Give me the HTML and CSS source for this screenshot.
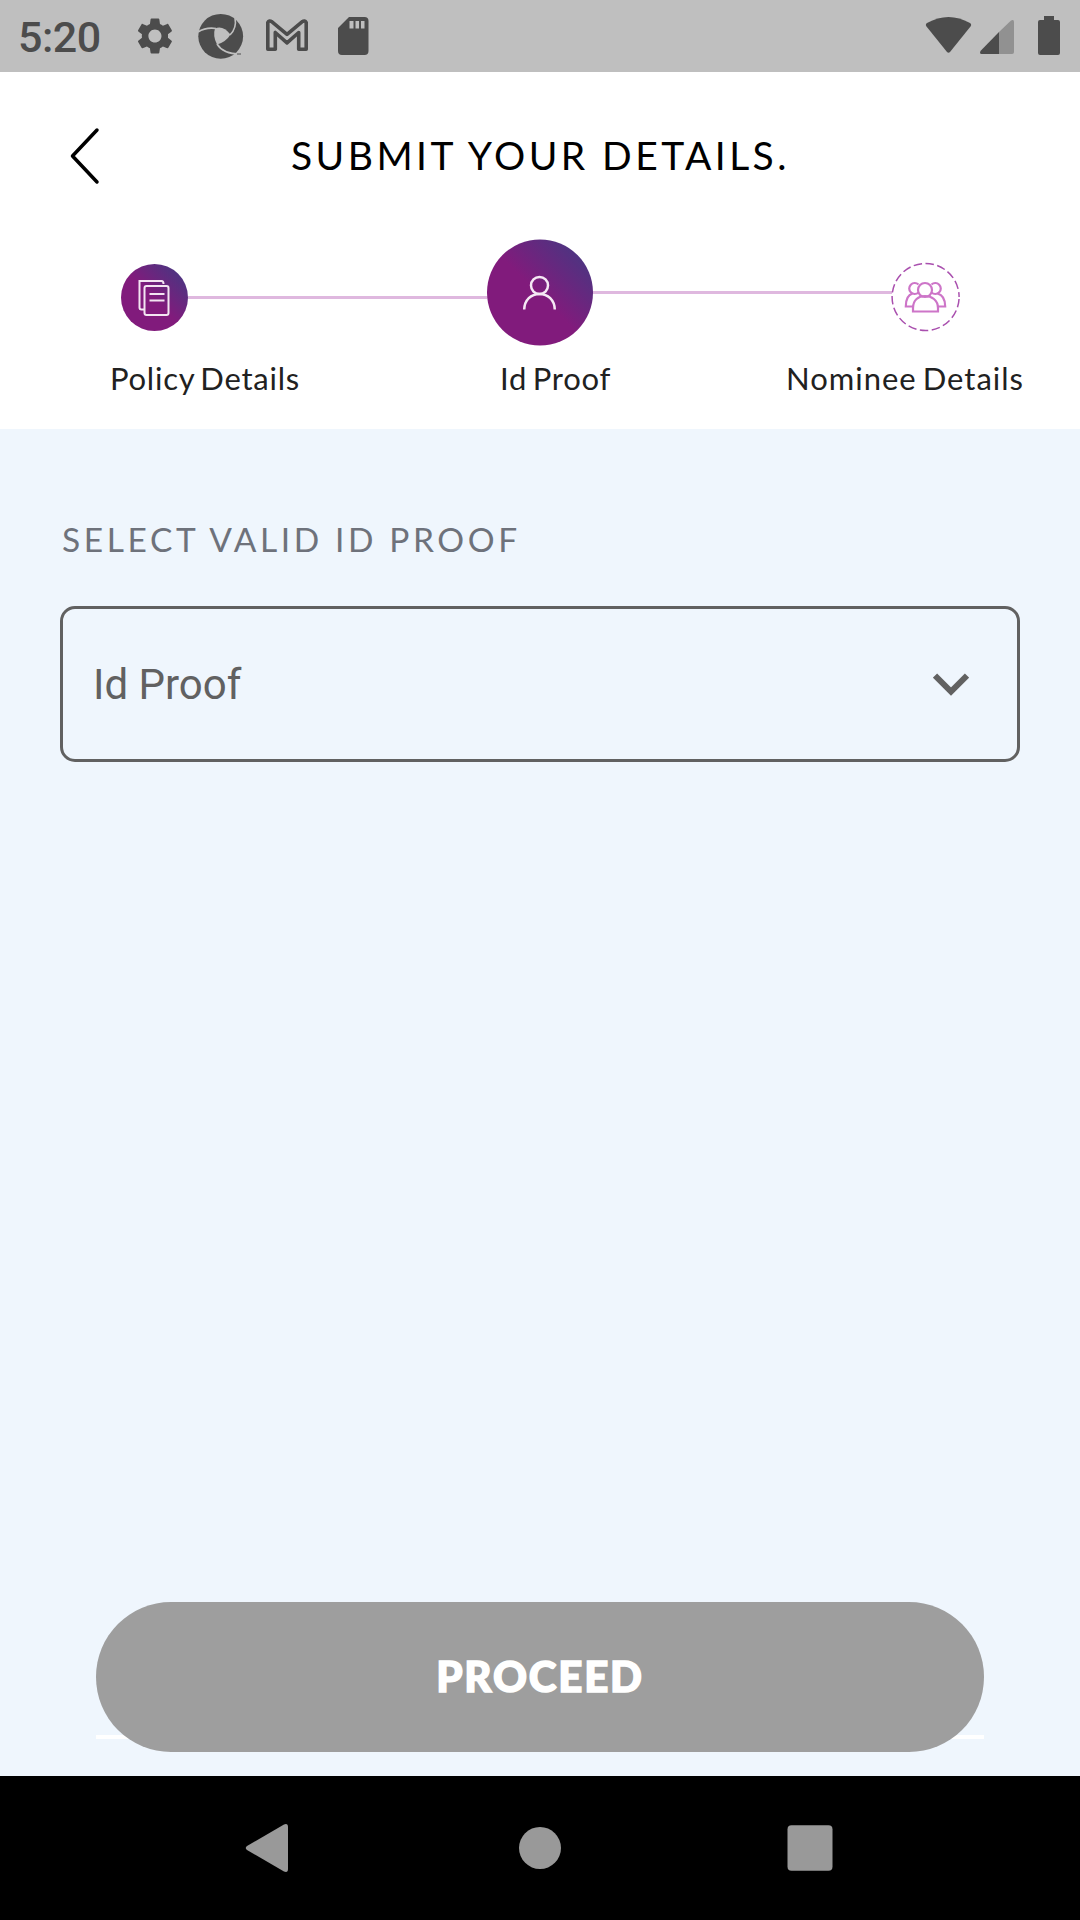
FILE: index.html
```html
<!DOCTYPE html>
<html lang="en">
<head>
<meta charset="utf-8">
<title>Submit your details</title>
<link rel="stylesheet" href="styles.css">
</head>
<body>
<div class="screen">
  <div class="status-bar">
    <span class="clock">5:20</span>
    <svg class="notifications" width="240" height="72" viewBox="130 0 240 72" fill="#4c4c4c">
      <path transform="translate(133.1 14.2) scale(1.82)" d="M19.14 12.94c.04-.3.06-.61.06-.94 0-.32-.02-.64-.07-.94l2.03-1.58c.18-.14.23-.41.12-.61l-1.92-3.32c-.12-.22-.37-.29-.59-.22l-2.39.96c-.5-.38-1.03-.7-1.62-.94l-.36-2.54c-.04-.24-.24-.41-.48-.41h-3.84c-.24 0-.43.17-.47.41l-.36 2.54c-.59.24-1.13.57-1.62.94l-2.39-.96c-.22-.08-.47 0-.59.22L2.74 8.87c-.12.21-.08.47.12.61l2.03 1.58c-.05.3-.09.63-.09.94s.02.64.07.94l-2.03 1.58c-.18.14-.23.41-.12.61l1.92 3.32c.12.22.37.29.59.22l2.39-.96c.5.38 1.03.7 1.62.94l.36 2.54c.05.24.24.41.48.41h3.84c.24 0 .44-.17.47-.41l.36-2.54c.59-.24 1.13-.56 1.62-.94l2.39.96c.22.08.47 0 .59-.22l1.92-3.32c.12-.22.07-.47-.12-.61l-2.01-1.58zM12 15.6c-1.98 0-3.6-1.62-3.6-3.6s1.62-3.6 3.6-3.6 3.6 1.62 3.6 3.6-1.62 3.6-3.6 3.6z"/>
      <circle cx="220.7" cy="36.3" r="22.4"/>
      <path fill="#bfbfbf" d="M215 28.500Q223 25 230.500 34.500Q226 42 217 44.500Q212.500 36 215 28.500Z"/>
      <path fill="none" stroke="#bfbfbf" stroke-width="1.6" d="M198 32Q206 27 216 28.500M235 18Q237 28 230 35M217 44Q223 54 240 54"/>
      <path d="M237 53.500h4v1h-4z"/>
      <path fill="none" stroke="#4c4c4c" stroke-width="3.600" stroke-linejoin="round" d="M267.800 49.200V22.500Q269 20 272 21.800L287 34.300L302 21.800Q305 20 306.200 22.500V49.200H298.700V32.500L287 42.800L275.300 32.500V49.200Z"/>
      <path fill-rule="evenodd" d="M349 17h15.500q4 0 4 4v30q0 4-4 4H342q-4 0-4-4V28zM349.500 21v7.500h4V21zM355.500 21v7.500h3.500V21zM361 21v7.500h3.500V21z"/>
    </svg>
    <svg class="system" width="150" height="72" viewBox="920 0 150 72" fill="#4c4c4c">
      <path d="M926.500 26.500Q925 24.500 927 23Q948.500 11 970 23Q972 24.500 970.500 26.500L950 52Q948.500 53.500 947 52Z"/>
      <path fill="#919191" d="M999 32L1011 20.500Q1014 19 1014 22V52Q1014 54 1012 54H999Z"/>
      <path d="M999 32V54H981.500Q979 53.500 980.700 50.700Z"/>
      <path d="M1044 16h10v4h4q2 0 2 2v31q0 2-2 2h-18q-2 0-2-2V22q0-2 2-2h4z"/>
    </svg>
  </div>

  <header class="header">
    <div class="title-row">
      <svg class="back" width="34" height="60" viewBox="68 126 34 60"><path d="M97 130L72.500 156L97 182" fill="none" stroke="#000" stroke-width="3.500" stroke-linecap="round" stroke-linejoin="round"/></svg>
      <h1 class="title">SUBMIT YOUR DETAILS.</h1>
    </div>
    <div class="stepper">
      <svg class="dot dot-policy" width="67" height="67" viewBox="0 0 67 67">
        <defs><linearGradient id="brand" x1="0.15" y1="0.9" x2="0.9" y2="0.15"><stop offset="0.48" stop-color="#811b7c"/><stop offset="1" stop-color="#4d3481"/></linearGradient></defs>
        <circle cx="33.500" cy="33.500" r="33.500" fill="url(#brand)"/>
        <g fill="none" stroke="#f3e5f2" stroke-width="2" transform="translate(-.5 0)"><path d="M23.500 45.500H21Q19 45.500 19 43.500V17H41Q43 17 43 20"/><rect x="24" y="22" width="24" height="29" rx="2"/><path d="M29 30H44M29 36.500H44"/></g>
      </svg>
      <span class="line line-done"></span>
      <svg class="dot dot-id" width="106" height="107" viewBox="0 -0.500 106 107">
        <circle cx="53" cy="53" r="53" fill="url(#brand)"/>
        <g fill="none" stroke="#f5e8f4" stroke-width="2.500"><circle cx="52.500" cy="46" r="8.500"/><path d="M37.200 70C37.500 60.500 44 54.500 52.500 54.500S67.500 60.500 67.800 70"/></g>
      </svg>
      <span class="line line-next"></span>
      <svg class="dot dot-nominee" width="70" height="70" viewBox="0 0 70 70">
        <circle cx="34.600" cy="35" r="33.500" fill="none" stroke="#a94fae" stroke-width="1.500" stroke-dasharray="8.500 3.460" stroke-dashoffset="-2"/>
        <g fill="none" stroke="#cd75c8" stroke-width="2.200" transform="translate(-.5 0)"><circle cx="34.500" cy="28" r="7"/><path d="M22.500 49.500V46C22.500 38 28 34 34.500 34S47.500 38 47.500 46V49.500Z"/><path d="M28 22.500A5.500 5.500 0 1 0 28 30.500M41 22.500A5.500 5.500 0 1 1 41 30.500M22 31.500C17 33 15.300 38 15.300 44.500H22.500M47 31.500C52.500 33 54.700 38 54.700 44.500H47.500"/></g>
      </svg>
    </div>
    <div class="labels"><span class="label-policy">Policy Details</span><span class="label-id">Id Proof</span><span class="label-nominee">Nominee Details</span></div>
  </header>

  <main class="content">
    <h2 class="caption">SELECT VALID ID PROOF</h2>
    <div class="select">
      <span class="select-value">Id Proof</span>
      <svg width="36" height="23" viewBox="0 0 36 23"><path d="M2 2.500L18 18.500L34 2.500" fill="none" stroke="#616161" stroke-width="6"/></svg>
    </div>
    <div class="action"><button class="proceed">PROCEED</button></div>
  </main>

  <nav class="nav-bar">
    <svg width="1080" height="144" viewBox="0 1776 1080 144" fill="#999"><path d="M247 1846L284 1824.500Q288 1823 288 1827V1869Q288 1873 284 1871.500L247 1850Q244.500 1848 247 1846Z"/><circle cx="540" cy="1848" r="21"/><rect x="787.500" y="1825.300" width="45" height="45.400" rx="4"/></svg>
  </nav>
</div>
</body>
</html>
```
FILE: styles.css
```css
* { box-sizing: border-box; }
body { margin: 0; font-family: Lato, "Liberation Sans", sans-serif; }
.screen { width: 1080px; height: 1920px; display: flex; flex-direction: column; background: #eff6fd; overflow: hidden; }
svg { display: block; flex: none; }

.status-bar { height: 72px; flex: none; display: flex; align-items: center; background: #bfbfbf; }
.clock { width: 130px; padding: 2px 0 0 18px; font: 500 43px/72px Roboto, sans-serif; letter-spacing: -0.5px; color: #4c4c4c; }
.system { margin-left: auto; margin-right: 10px; }

.header { height: 357px; flex: none; background: #fff; }
.title-row { height: 167px; display: flex; align-items: center; padding-left: 68px; }
.title { margin: 0 0 2px 189px; font-size: 39px; font-weight: 400; line-height: 48px; color: #000; white-space: nowrap; letter-spacing: 3.45px; }
.stepper { height: 107px; display: flex; align-items: center; padding: 0 119px 0 121px; }
.dot-policy { margin-top: 9px; }
.dot-nominee { margin-top: 8px; }
.line { flex: 1; height: 3px; background: #dfb8df; }
.line-done { margin-top: 10px; }
.line-next { margin-right: -1px; }
.labels { display: flex; padding: 14px 0 0 110px; font-size: 31px; line-height: 36px; letter-spacing: 0.75px; word-spacing: -3px; color: #212121; white-space: nowrap; }
.label-policy { width: 390px; }
.label-id { width: 286px; }
.label-nominee { letter-spacing: 1px; }

.content { height: 1347px; flex: none; display: flex; flex-direction: column; padding: 90px 60px 24px; }
.caption { margin: 0 0 47px 2px; font-size: 33.5px; font-weight: 400; line-height: 40px; letter-spacing: 3.6px; color: #6e727b; white-space: nowrap; }
.select { height: 156px; display: flex; align-items: center; justify-content: space-between; padding: 0 48px 0 30px; border: 3px solid #616161; border-radius: 15px; font: 42px/50px Roboto, sans-serif; color: #616161; }
.select-value { padding-top: 2px; }
.action { height: 150px; margin: auto 36px 0; background: linear-gradient(#fff, #fff) 0 133px / 100% 4px no-repeat; }
.proceed { display: block; width: 100%; height: 150px; padding: 0 0 2px; border: 0; border-radius: 75px; background: #9e9e9e; color: #fff; font: 900 42px/50px Lato, sans-serif; letter-spacing: 1.8px; -webkit-text-stroke: 1.5px #fff; }

.nav-bar { height: 144px; flex: none; background: #000; }
```
